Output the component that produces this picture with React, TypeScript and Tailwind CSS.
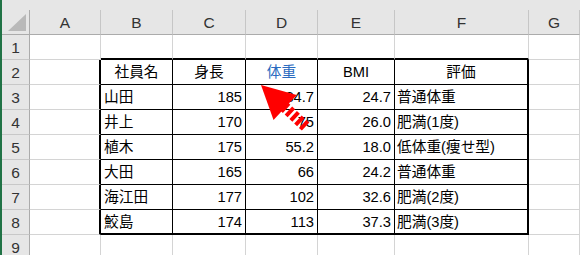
import React from "react";

const COLS = "grid grid-cols-[28px_71px_72px_73px_72px_77px_134px_51px]";
const FONT = { fontFamily: '"Liberation Sans", "Noto Sans CJK JP", sans-serif' };

const data: [string, string, string, string, string][] = [
  ["山田", "185", "84.7", "24.7", "普通体重"],
  ["井上", "170", "75", "26.0", "肥満(1度)"],
  ["植木", "175", "55.2", "18.0", "低体重(痩せ型)"],
  ["大田", "165", "66", "24.2", "普通体重"],
  ["海江田", "177", "102", "32.6", "肥満(2度)"],
  ["鮫島", "174", "113", "37.3", "肥満(3度)"],
];

const GRID = "border-r border-b border-[#d4d4d4]";
const TOPEDGE = "border-r border-r-[#d4d4d4] border-b-2 border-b-black";
const LEFTOF = "border-r-2 border-r-black border-b border-b-[#d4d4d4]";
const INNER = "border-r border-b border-black";
const INNER_LAST = "border-r border-r-black border-b-2 border-b-black";
const RIGHT = "border-r-2 border-r-black border-b border-b-black";
const RIGHT_LAST = "border-r-2 border-b-2 border-black";

function RowHead({ n }: { n: number }) {
  return (
    <div className="h-[25px] bg-[#e6e6e6] border-r border-r-[#ababab] border-b border-b-[#c8c8c8] flex items-center justify-center pt-[1px] text-[15.5px] text-[#333]">
      {n}
    </div>
  );
}

function Cell({
  cls,
  align = "left",
  blue = false,
  children,
}: {
  cls: string;
  align?: "left" | "right" | "center";
  blue?: boolean;
  children?: React.ReactNode;
}) {
  const a =
    align === "right"
      ? "justify-end pr-[3px]"
      : align === "center"
      ? "justify-center"
      : "justify-start pl-[2px]";
  return (
    <div
      className={`h-[25px] flex items-center pt-[1px] text-[14.7px] whitespace-nowrap overflow-visible ${a} ${cls} ${
        blue ? "text-[#2a6bc0]" : "text-black"
      }`}
    >
      {children}
    </div>
  );
}

export default function App() {
  const letters = ["A", "B", "C", "D", "E", "F", "G"];
  return (
    <div
      className="relative w-[580px] h-[255px] overflow-hidden bg-white border-l-2 border-[#217346]"
      style={FONT}
    >
      <div className="h-[10px] bg-[#e6e6e6]" />
      <div className={`${COLS} h-[25px] bg-[#e6e6e6]`}>
        <div className="relative border-r border-r-[#ababab] border-b border-b-[#ababab]">
          <svg className="absolute left-[6px] top-[4px]" width="18" height="17" viewBox="0 0 18 17">
            <polygon points="18,0 18,17 0,17" fill="#b9b9b9" />
          </svg>
        </div>
        {letters.map((l) => (
          <div
            key={l}
            className="border-r border-r-[#c6c6c6] border-b border-b-[#ababab] flex items-center justify-center pt-[1px] text-[15.5px] text-[#333]"
          >
            {l}
          </div>
        ))}
      </div>

      {/* row 1 */}
      <div className={COLS}>
        <RowHead n={1} />
        <Cell cls={GRID} />
        <Cell cls={TOPEDGE} />
        <Cell cls={TOPEDGE} />
        <Cell cls={TOPEDGE} />
        <Cell cls={TOPEDGE} />
        <Cell cls={TOPEDGE} />
        <Cell cls={GRID} />
      </div>

      {/* row 2 header */}
      <div className={COLS}>
        <RowHead n={2} />
        <Cell cls={LEFTOF} />
        <Cell cls={INNER} align="center">社員名</Cell>
        <Cell cls={INNER} align="center">身長</Cell>
        <Cell cls={INNER} align="center" blue>体重</Cell>
        <Cell cls={INNER} align="center">BMI</Cell>
        <Cell cls={RIGHT} align="center">評価</Cell>
        <Cell cls={GRID} />
      </div>

      {data.map((r, i) => {
        const last = i === data.length - 1;
        const inner = last ? INNER_LAST : INNER;
        const right = last ? RIGHT_LAST : RIGHT;
        return (
          <div className={COLS} key={i}>
            <RowHead n={i + 3} />
            <Cell cls={LEFTOF} />
            <Cell cls={inner}>
              <span className="pl-[1px]">{r[0]}</span>
            </Cell>
            <Cell cls={inner} align="right">{r[1]}</Cell>
            <Cell cls={inner} align="right">{r[2]}</Cell>
            <Cell cls={inner} align="right">{r[3]}</Cell>
            <Cell cls={right}>{r[4]}</Cell>
            <Cell cls={GRID} />
          </div>
        );
      })}

      {/* row 9 */}
      <div className={COLS}>
        <RowHead n={9} />
        <Cell cls={GRID} />
        <Cell cls={GRID} />
        <Cell cls={GRID} />
        <Cell cls={GRID} />
        <Cell cls={GRID} />
        <Cell cls={GRID} />
        <Cell cls={GRID} />
      </div>

      {/* red arrow overlay */}
      <svg
        className="absolute left-0 top-0 pointer-events-none"
        width="580"
        height="255"
        viewBox="0 0 580 255"
      >
        <g transform="translate(259 85) rotate(43)">
          <polygon points="0,0 33,-17 33,17" fill="#ff0000" />
          <line
            x1="31"
            y1="0"
            x2="61"
            y2="0"
            stroke="#ff0000"
            strokeWidth="11"
            strokeDasharray="4 2.5"
          />
        </g>
      </svg>
    </div>
  );
}
